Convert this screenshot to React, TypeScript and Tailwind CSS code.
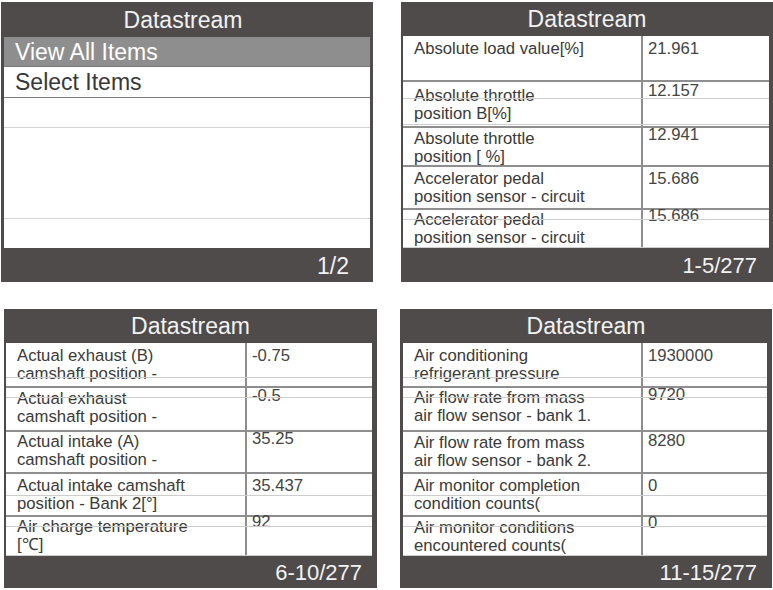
import React from "react";

type Row = { label: string[]; value: string; h: string; lp: string; vp: string; last?: boolean };

const P2: Row[] = [
  { label: ["Absolute load value[%]"], value: "21.961", h: "h-[46px]", lp: "pt-[4px]", vp: "pt-[4px]" },
  { label: ["Absolute throttle", "position B[%]"], value: "12.157", h: "h-[46px]", lp: "pt-[5px]", vp: "pt-0" },
  { label: ["Absolute throttle", "position [ %]"], value: "12.941", h: "h-[39px]", lp: "pt-[2px]", vp: "-mt-[2px]" },
  { label: ["Accelerator pedal", "position sensor - circuit"], value: "15.686", h: "h-[43px]", lp: "pt-[3px]", vp: "pt-[3px]" },
  { label: ["Accelerator pedal", "position sensor - circuit"], value: "15.686", h: "h-[38px]", lp: "pt-[1px]", vp: "-mt-[3px]", last: true },
];

const P3: Row[] = [
  { label: ["Actual exhaust (B)", "camshaft position -"], value: "-0.75", h: "h-[45px]", lp: "pt-[4px]", vp: "pt-[4px]" },
  { label: ["Actual exhaust", "camshaft position -"], value: "-0.5", h: "h-[44px]", lp: "pt-[2px]", vp: "-mt-[1px]" },
  { label: ["Actual intake (A)", "camshaft position -"], value: "35.25", h: "h-[42px]", lp: "pt-[1px]", vp: "-mt-[2px]" },
  { label: ["Actual intake camshaft", "position - Bank 2[°]"], value: "35.437", h: "h-[43px]", lp: "pt-[3px]", vp: "pt-[3px]" },
  { label: ["Air charge temperature", "[℃]"], value: "92", h: "h-[39px]", lp: "pt-[1px]", vp: "-mt-[4px]", last: true },
];

const P4: Row[] = [
  { label: ["Air conditioning", "refrigerant pressure"], value: "1930000", h: "h-[45px]", lp: "pt-[4px]", vp: "pt-[4px]" },
  { label: ["Air flow rate from mass", "air flow sensor - bank 1."], value: "9720", h: "h-[44px]", lp: "pt-[1px]", vp: "-mt-[2px]" },
  { label: ["Air flow rate from mass", "air flow sensor - bank 2."], value: "8280", h: "h-[42px]", lp: "pt-[2px]", vp: "pt-0" },
  { label: ["Air monitor completion", "condition counts("], value: "0", h: "h-[43px]", lp: "pt-[3px]", vp: "pt-[3px]" },
  { label: ["Air monitor conditions", "encountered counts("], value: "0", h: "h-[39px]", lp: "pt-[2px]", vp: "-mt-[3px]", last: true },
];

function Header({ h }: { h: string }) {
  return (
    <div className={`${h} flex items-center justify-center text-[23px] text-[#f2f2f2] leading-none`}>
      <span className="pt-[1px]">Datastream</span>
    </div>
  );
}

function Footer({ h, text, pr }: { h: string; text: string; pr: string }) {
  return (
    <div className={`${h} flex items-center justify-end ${pr} text-[22px] text-[#f2f2f2] leading-none`}>
      <span className="pt-[2px]">{text}</span>
    </div>
  );
}

function Table({
  rows,
  labelW,
  faint,
}: {
  rows: Row[];
  labelW: string;
  faint: string[];
}) {
  return (
    <div className="relative flex-1 flex flex-col bg-white overflow-hidden">
      {rows.map((r, i) => (
        <div
          key={i}
          className={`${r.h} shrink-0 flex ${r.last ? "border-b border-[#cfcfcf]" : "border-b-2 border-[#8e8e8e]"}`}
        >
          <div className={`${labelW} shrink-0 pl-[11px] ${r.lp} overflow-hidden text-[16.7px] leading-[17.5px] text-[#3a3a3a]`}>
            {r.label.map((l, j) => (
              <div key={j} className="whitespace-nowrap">
                {l}
              </div>
            ))}
          </div>
          <div className="flex-1 border-l-2 border-[#8e8e8e] pl-[5px] overflow-visible">
            <div className={`${r.vp} text-[16.7px] leading-[17.5px] text-[#444]`}>{r.value}</div>
          </div>
        </div>
      ))}
      {faint.map((f, i) => (
        <div key={i} className={`absolute left-0 right-0 h-px bg-[#cdcdcd] ${f}`} />
      ))}
    </div>
  );
}

export default function App() {
  return (
    <div className="w-[773px] h-[590px] bg-white pt-[2px] overflow-hidden font-['Liberation_Sans',Arial,sans-serif]">
      {/* top row */}
      <div className="flex h-[280px]">
        {/* panel 1 */}
        <div className="ml-[1px] w-[372px] h-full bg-[#4f4b4b] flex flex-col">
          <div className="h-[35px] flex items-center justify-center pr-[8px] text-[23px] text-[#f2f2f2] leading-none">
            <span className="pt-[1px]">Datastream</span>
          </div>
          <div className="flex-1 mx-[3px] bg-white flex flex-col">
            <div className="h-[30px] bg-[#8f8e8e] border-b border-[#7a7878] pl-[11px] text-[23px] leading-[30px] text-white">
              View All Items
            </div>
            <div className="h-[31px] border-b border-[#7c7c7c] pl-[11px] text-[23px] leading-[30px] text-[#383838]">
              Select Items
            </div>
            <div className="h-[30px] border-b border-[#d4d4d4]" />
            <div className="h-[91px] border-b border-[#d4d4d4]" />
            <div className="flex-1" />
          </div>
          <div className="h-[34px] flex items-center justify-end pr-[24px] text-[23px] text-[#f2f2f2] leading-none">
            <span className="pt-[3px]">1/2</span>
          </div>
        </div>

        {/* panel 2 */}
        <div className="ml-[28px] w-[372px] h-full bg-[#4f4b4b] flex flex-col">
          <Header h="h-[34px]" />
          <div className="flex-1 flex ml-[2px] mr-[4px]">
            <Table rows={P2} labelW="w-[238px]" faint={["top-[62px]", "top-[88px]", "top-[183px]"]} />
          </div>
          <Footer h="h-[34px]" text="1-5/277" pr="pr-[16px]" />
        </div>
      </div>

      {/* bottom row */}
      <div className="flex h-[279px] mt-[27px]">
        {/* panel 3 */}
        <div className="ml-[4px] w-[373px] h-full bg-[#4f4b4b] flex flex-col">
          <Header h="h-[34px]" />
          <div className="flex-1 flex ml-[2px] mr-[5px]">
            <Table rows={P3} labelW="w-[239px]" faint={["top-[34px]", "top-[54px]", "top-[152px]", "top-[183px]"]} />
          </div>
          <Footer h="h-[32px]" text="6-10/277" pr="pr-[15px]" />
        </div>

        {/* panel 4 */}
        <div className="ml-[23px] w-[372px] h-full bg-[#4f4b4b] flex flex-col">
          <Header h="h-[34px]" />
          <div className="flex-1 flex ml-[3px] mr-[5px]">
            <Table rows={P4} labelW="w-[238px]" faint={["top-[34px]", "top-[54px]", "top-[152px]", "top-[183px]"]} />
          </div>
          <Footer h="h-[32px]" text="11-15/277" pr="pr-[15px]" />
        </div>
      </div>
    </div>
  );
}
